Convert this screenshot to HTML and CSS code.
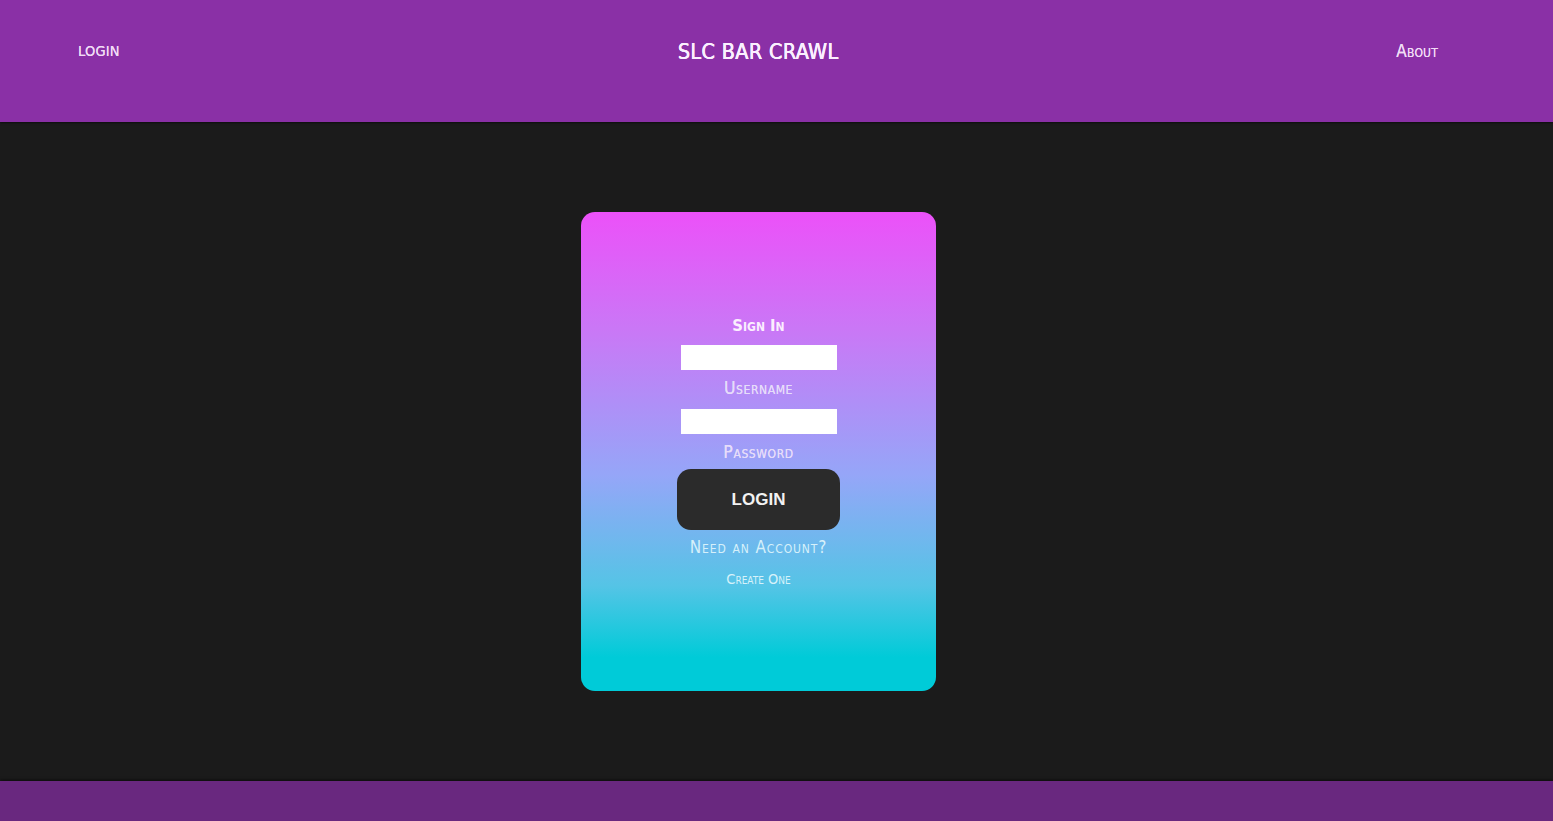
FILE: index.html
```html
<!DOCTYPE html>
<html lang="en">
<head>
<meta charset="utf-8">
<title>SLC Bar Crawl</title>
<link rel="stylesheet" href="styles.css">
</head>
<body>
<header class="topbar">
  <a class="nav-left" href="#">LOGIN</a>
  <h1 class="brand">SLC BAR CRAWL</h1>
  <a class="nav-right" href="#">About</a>
</header>
<main class="stage">
  <section class="card">
    <h2 class="card-title">Sign In</h2>
    <form class="form">
      <input class="field" type="text">
      <label class="label">Username</label>
      <input class="field" type="password">
      <label class="label">Password</label>
      <button class="btn" type="button">LOGIN</button>
    </form>
    <p class="need">Need an Account?</p>
    <a class="create" href="#">Create One</a>
  </section>
</main>
<footer class="footer"></footer>
</body>
</html>
```
FILE: styles.css
```css
* { box-sizing: border-box; }
html, body { margin: 0; padding: 0; height: 100%; }
body {
  background: #1b1b1b;
  font-family: "DejaVu Sans Condensed", "DejaVu Sans", sans-serif;
  display: flex;
  flex-direction: column;
  height: 821px;
  overflow: hidden;
}
.topbar {
  height: 122px;
  flex: none;
  background: #8a30a6;
  display: grid;
  grid-template-columns: 1fr auto 1fr;
  align-items: center;
  padding: 0 115px 20px 78px;
  box-shadow: 0 1px 2px rgba(0,0,0,0.5);
}
.nav-left, .nav-right {
  color: #f0dcf6;
  text-decoration: none;
  font-size: 14.5px;
  letter-spacing: 0.2px;
  text-shadow: 0 0 0.4px #f0dcf6;
}
.nav-left { justify-self: start; }
.nav-right { justify-self: end; font-variant: small-caps; font-size: 17px; }
.brand {
  margin: 0;
  color: #fbf0ff;
  font-size: 21.5px;
  font-weight: normal;
  letter-spacing: 0.3px;
  text-shadow: 0 0 0.6px #fbf0ff, 0.4px 0 0 #fbf0ff;
}
.stage {
  flex: 1;
  display: flex;
  align-items: center;
  justify-content: center;
  padding-right: 36px;
}
.card {
  width: 355px;
  height: 479px;
  border-radius: 14px;
  background: linear-gradient(180deg, #ec51f9 0%, #c978f6 25%, #95a6f8 55%, #55c4e6 78%, #00cbd8 93%, #00cbd8 100%);
  display: flex;
  flex-direction: column;
  align-items: center;
  padding-top: 104px;
}
.card-title {
  margin: 0;
  font-variant: small-caps;
  font-weight: bold;
  font-size: 16.5px;
  color: #fbeefe;
  line-height: 20px;
}
.form {
  display: flex;
  flex-direction: column;
  align-items: center;
  margin-top: 9px;
}
.field {
  width: 156px;
  height: 25px;
  border: 0;
  background: #ffffff;
  margin: 0;
  padding: 0 4px;
}
.label {
  font-variant: small-caps;
  font-size: 17.5px;
  letter-spacing: 0.6px;
  color: #e6dcfa;
  line-height: 20px;
  margin: 8px 0 11px;
  text-shadow: 0 0 0.4px #e6dcfa;
}
.form .label:last-of-type { margin-bottom: 7px; }
.btn {
  width: 163px;
  height: 61px;
  border: 0;
  border-radius: 14px;
  background: #2b2b2b;
  color: #f2f2f2;
  font-family: "Liberation Sans", Arial, sans-serif;
  font-weight: bold;
  font-size: 17px;
}
.need {
  margin: 8px 0 0;
  font-variant: small-caps;
  font-size: 17px;
  color: #d6f0fa;
  line-height: 18px;
  letter-spacing: 0.9px;
}
.create {
  margin-top: 14px;
  font-variant: small-caps;
  font-size: 14.5px;
  color: #d6f2fa;
  text-decoration: none;
  line-height: 18px;
}
.footer {
  height: 40px;
  flex: none;
  background: #69287f;
  box-shadow: 0 -1px 3px rgba(0,0,0,0.6);
}
```
